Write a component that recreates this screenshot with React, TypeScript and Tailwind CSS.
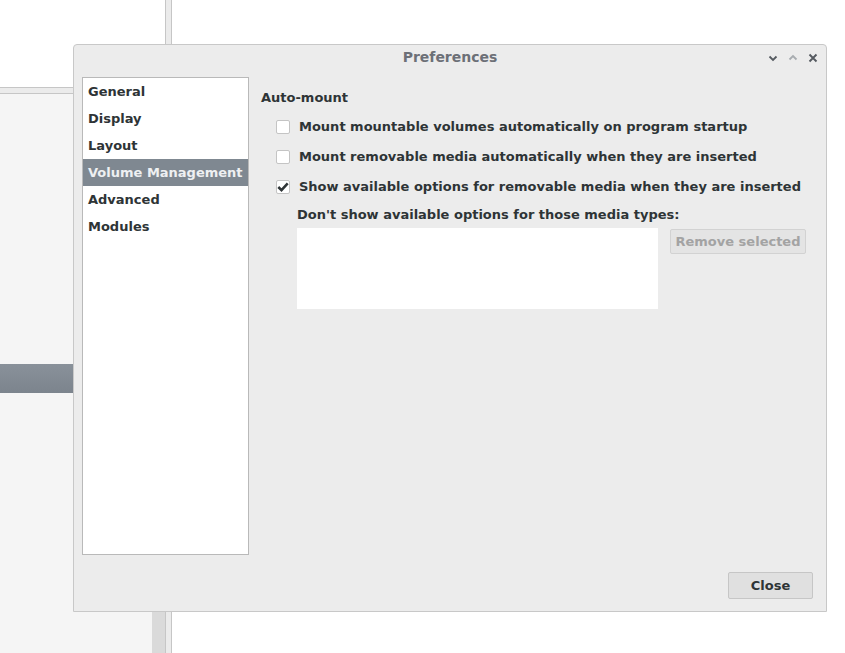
const font = { fontFamily: '"DejaVu Sans", "Liberation Sans", sans-serif' };

function Check({ checked }: { checked?: boolean }) {
  return (
    <span className="flex h-[14px] w-[14px] shrink-0 items-center justify-center rounded-[2px] border border-[#c4c4c4] bg-white">
      {checked && (
        <svg width="12" height="12" viewBox="0 0 12 12">
          <path d="M1.3 6 L4.5 9.2 L10.7 2.3" fill="none" stroke="#2e3436" strokeWidth="2.5" />
        </svg>
      )}
    </span>
  );
}

function Option({ label, checked }: { label: string; checked?: boolean }) {
  return (
    <div className="flex h-[30px] items-center gap-[9px] pl-[15px]">
      <Check checked={checked} />
      <span>{label}</span>
    </div>
  );
}

const pages = ["General", "Display", "Layout", "Volume Management", "Advanced", "Modules"];

export default function App() {
  return (
    <div className="relative flex h-[653px] w-[845px] overflow-hidden bg-white text-[13px] font-bold text-[#2e3436]" style={font}>
      {/* app behind the dialog */}
      <div className="flex w-[165px] flex-col">
        <div className="h-[87px] bg-white" />
        <div className="h-[7px] border-y border-[#c6c6c6] bg-[#ebebeb]" />
        <div className="flex flex-1">
          <div className="flex-1 bg-[#f5f5f5] pt-[270px]">
            <div className="h-[29px] bg-gradient-to-b from-[#89919a] to-[#7c848d]" />
          </div>
          <div className="w-[13px] bg-[#dadada]" />
        </div>
      </div>
      <div className="w-[7px] border-x border-[#c6c6c6] bg-[#ebebeb]" />
      <div className="flex-1 bg-white" />

      {/* dialog window */}
      <div className="absolute left-[73px] top-[44px] flex h-[568px] w-[754px] flex-col rounded-t-[4px] border border-[#c8c8c8] bg-[#ececec]">
        <div className="relative flex h-[27px] items-center justify-center pb-[2px]">
          <span className="text-[14px] text-[#6c7077]">Preferences</span>
          <div className="absolute right-[8px] top-[8px] flex items-center gap-[10px]">
            <svg width="10" height="10" viewBox="0 0 10 10">
              <path d="M1.5 3.5 L5 7 L8.5 3.5" fill="none" stroke="#555a60" strokeWidth="1.8" />
            </svg>
            <svg width="10" height="10" viewBox="0 0 10 10">
              <path d="M1.5 6.5 L5 3 L8.5 6.5" fill="none" stroke="#a8acb0" strokeWidth="1.8" />
            </svg>
            <svg width="10" height="10" viewBox="0 0 10 10">
              <path d="M1.5 1.5 L8.5 8.5 M8.5 1.5 L1.5 8.5" fill="none" stroke="#555a60" strokeWidth="1.9" />
            </svg>
          </div>
        </div>

        <div className="flex flex-1 gap-[12px] pl-[8px] pt-[5px]">
          <div className="h-[478px] w-[167px] border border-[#b9b9b9] bg-white">
            {pages.map((p) => (
              <div
                key={p}
                className={
                  p === "Volume Management"
                    ? "flex h-[27px] items-center bg-[#7f8891] pl-[5px] text-[#eef0f2]"
                    : "flex h-[27px] items-center pl-[5px]"
                }
              >
                {p}
              </div>
            ))}
          </div>

          <div className="flex-1 pt-[7px]">
            <div className="flex h-[28px] items-center">Auto-mount</div>
            <Option label="Mount mountable volumes automatically on program startup" />
            <Option label="Mount removable media automatically when they are inserted" />
            <Option label="Show available options for removable media when they are inserted" checked />
            <div className="flex h-[26px] items-center pl-[36px]">Don't show available options for those media types:</div>
            <div className="flex gap-[12px] pl-[36px]">
              <div className="h-[81px] w-[361px] bg-white" />
              <button className="mt-[1px] h-[25px] w-[136px] rounded-[2px] border border-[#d2d2d2] bg-[#e4e4e4] text-[#a3a3a3]">
                Remove selected
              </button>
            </div>
          </div>
        </div>

        <div className="flex justify-end pb-[12px] pr-[13px]">
          <button className="h-[27px] w-[85px] rounded-[2px] border border-[#c6c6c6] bg-[#e0e0e0] text-[#2e3436]">
            Close
          </button>
        </div>
      </div>
    </div>
  );
}
